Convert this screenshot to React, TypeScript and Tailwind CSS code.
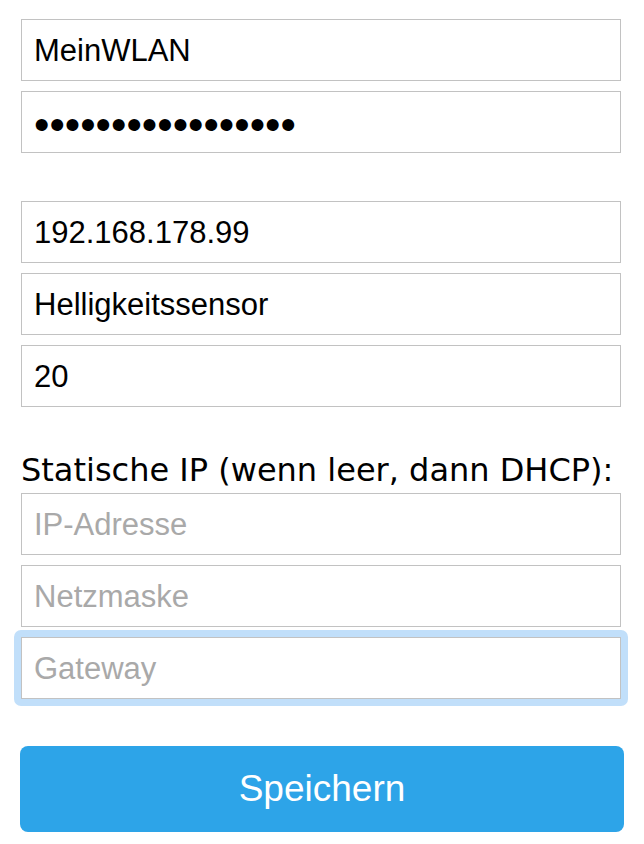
const inputCls =
  "block h-[62px] w-[600px] border border-[#c2c2c2] bg-white px-3 pt-[2px] text-[31px] text-black outline-none placeholder:text-[#a9a9a9]"

export default function App() {
  return (
    <div className="min-h-[844px] bg-white pl-[21px] pt-[19px] font-['Liberation_Sans',Arial,sans-serif]">
      <form className="flex flex-col" onSubmit={(e) => e.preventDefault()}>
        <input className={inputCls} type="text" defaultValue="MeinWLAN" />
        <input
          className="mt-[10px] block h-[62px] w-[600px] border border-[#c2c2c2] bg-white px-3 pt-[5px] text-[44px] text-black outline-none"
          type="password"
          defaultValue="geheimespasswort1"
        />

        <input className={`${inputCls} mt-[48px]`} type="text" defaultValue="192.168.178.99" />
        <input className={`${inputCls} mt-[10px]`} type="text" defaultValue="Helligkeitssensor" />
        <input className={`${inputCls} mt-[10px]`} type="text" defaultValue="20" />

        <label className="mt-[45px] mb-[5px] block font-['DejaVu_Sans',Verdana,sans-serif] text-[32px] leading-[36px] text-black">
          Statische IP (wenn leer, dann DHCP):
        </label>
        <input className={inputCls} type="text" placeholder="IP-Adresse" />
        <input className={`${inputCls} mt-[10px]`} type="text" placeholder="Netzmaske" />
        <div className="mt-[3px] -mx-[7px] -mb-[7px] w-[614px] rounded-[7px] bg-[#c1dffa] p-[7px]">
          <input className={inputCls} type="text" placeholder="Gateway" />
        </div>

        <button
          type="submit"
          className="mt-[47px] -ml-px h-[86px] w-[604px] rounded-[8px] bg-[#2da4e8] text-[37px] text-white"
        >
          Speichern
        </button>
      </form>
    </div>
  )
}
